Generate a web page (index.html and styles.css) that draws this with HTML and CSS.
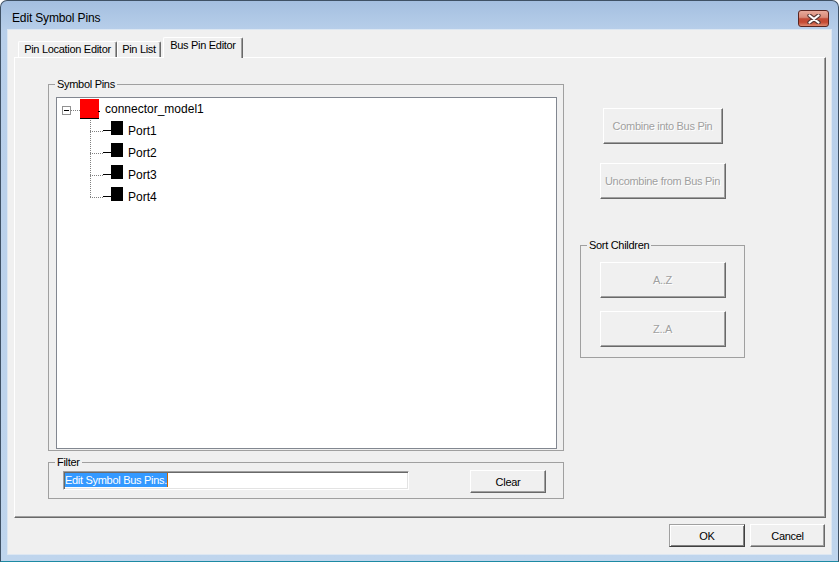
FILE: index.html
```html
<!DOCTYPE html>
<html lang="en">
<head>
  <meta charset="UTF-8">
  <title>Edit Symbol Pins</title>
  <link rel="stylesheet" href="styles.css">
</head>
<body>
  <div class="window">
    <div class="titlebar">
      <span class="title">Edit Symbol Pins</span>
      <button class="close" title="Close">
        <svg width="14" height="10" viewBox="0 0 14 10">
          <path d="M2.5 1.5L11.5 8.5M11.5 1.5L2.5 8.5" stroke="#5b3936" stroke-width="4.4" stroke-linecap="round"/>
          <path d="M2.5 1.5L11.5 8.5M11.5 1.5L2.5 8.5" stroke="#fff" stroke-width="2.2" stroke-linecap="round"/>
        </svg>
      </button>
    </div>

    <div class="client">
      <div class="tabs">
        <div class="tab tab-location">Pin Location Editor</div>
        <div class="tab tab-list">Pin List</div>
        <div class="tab active">Bus Pin Editor</div>
      </div>

      <div class="page">
        <div class="left">
          <fieldset class="group pins">
            <legend>Symbol Pins</legend>
            <div class="tree">
              <div class="node root">
                <span class="expander"></span>
                <span class="link"></span>
                <svg class="bus-icon" width="20" height="20" viewBox="0 0 20 20">
                  <rect x="0" y="0" width="19" height="19" fill="#ff0000"/>
                  <path d="M0 19.5H19M18 12.5H21" stroke="#000"/>
                </svg>
                <span class="label">connector_model1</span>
              </div>
              <div class="node child">
                <span class="branch"></span>
                <svg class="pin-icon" width="20" height="22" viewBox="0 0 20 22">
                  <path d="M0 10.5H8" stroke="#000"/>
                  <rect x="8" y="1" width="12" height="14" fill="#000"/>
                </svg>
                <span class="label">Port1</span>
              </div>
              <div class="node child">
                <span class="branch"></span>
                <svg class="pin-icon" width="20" height="22" viewBox="0 0 20 22">
                  <path d="M0 10.5H8" stroke="#000"/>
                  <rect x="8" y="1" width="12" height="14" fill="#000"/>
                </svg>
                <span class="label">Port2</span>
              </div>
              <div class="node child">
                <span class="branch"></span>
                <svg class="pin-icon" width="20" height="22" viewBox="0 0 20 22">
                  <path d="M0 10.5H8" stroke="#000"/>
                  <rect x="8" y="1" width="12" height="14" fill="#000"/>
                </svg>
                <span class="label">Port3</span>
              </div>
              <div class="node child last">
                <span class="branch"></span>
                <svg class="pin-icon" width="20" height="22" viewBox="0 0 20 22">
                  <path d="M0 10.5H8" stroke="#000"/>
                  <rect x="8" y="1" width="12" height="14" fill="#000"/>
                </svg>
                <span class="label">Port4</span>
              </div>
            </div>
          </fieldset>

          <fieldset class="group filter">
            <legend>Filter</legend>
            <div class="filter-row">
              <div class="textbox"><span class="selected">Edit Symbol Bus Pins.</span></div>
              <button class="btn clear">Clear</button>
            </div>
          </fieldset>
        </div>

        <div class="right">
          <button class="btn combine" disabled>Combine into Bus Pin</button>
          <button class="btn uncombine" disabled>Uncombine from Bus Pin</button>
          <fieldset class="group sort">
            <legend>Sort Children</legend>
            <button class="btn sort-btn" disabled>A..Z</button>
            <button class="btn sort-btn" disabled>Z..A</button>
          </fieldset>
        </div>
      </div>

      <div class="actions">
        <button class="btn ok">OK</button>
        <button class="btn cancel">Cancel</button>
      </div>
    </div>
  </div>
</body>
</html>
```

FILE: styles.css
```css
body {
  margin: 0;
  background: #fff;
  font: 11px "Liberation Sans", Arial, sans-serif;
  letter-spacing: -0.3px;
  color: #000;
}

/* window frame */
.window {
  width: 839px;
  height: 562px;
  box-sizing: border-box;
  border: 1px solid #3f5165;
  border-bottom-color: #1d8aa3;
  border-radius: 7px 7px 0 0;
  background: linear-gradient(#a4bfe0 0, #b8cfea 30px, #bfd5ed 100%);
}
.titlebar {
  height: 28px;
  display: flex;
  justify-content: space-between;
  align-items: flex-start;
}
.title {
  margin: 10px 0 0 11px;
  font-size: 12px;
  line-height: 15px;
  letter-spacing: -0.15px;
}
.close {
  margin: 9px 9px 0 0;
  width: 31px;
  height: 17px;
  box-sizing: border-box;
  padding: 0;
  border: 1px solid #5a2520;
  border-radius: 3px;
  background: linear-gradient(#e8aa9b 0%, #d98b79 42%, #c24b36 52%, #c64a33 75%, #de8a71 100%);
  display: flex;
  align-items: center;
  justify-content: center;
}

.client {
  margin: 0 6px;
  height: 526px;
  box-sizing: border-box;
  border: 1px solid #dde7f2;
  background: #f0f0f0;
  padding-top: 7px;
}

/* tab strip */
.tabs {
  display: flex;
  align-items: flex-end;
  height: 20px;
  margin-left: 10px;
}
.tab {
  height: 16px;
  box-sizing: border-box;
  border-top: 1px solid #fff;
  border-left: 1px solid #fff;
  border-right: 1px solid #696969;
  box-shadow: inset -1px 0 #a0a0a0;
  border-radius: 2px 2px 0 0;
  line-height: 15px;
  text-align: center;
  white-space: nowrap;
}
.tab-location { width: 99px; }
.tab-list { width: 44px; }
.tab.active {
  width: 80px;
  height: 21px;
  margin: 0 0 -1px 2px;
  position: relative;
  z-index: 1;
  background: #f0f0f0;
}

.page {
  margin-left: 6px;
  width: 812px;
  height: 461px;
  box-sizing: border-box;
  border: 1px solid;
  border-color: #fff #696969 #696969 #fff;
  box-shadow: inset -1px -1px #a0a0a0;
  padding: 20px 0 0 33px;
  display: flex;
  align-items: flex-start;
}

/* group boxes */
.group {
  margin: 0;
  padding: 0;
  min-width: 0;
  box-sizing: border-box;
  border: 1px solid #a0a0a0;
}
.group legend {
  padding: 0 2px;
  margin-left: 6px;
  font-size: 11px;
  line-height: 13px;
}

.left { width: 516px; }
.pins { padding: 6px 0 1px; }
.tree {
  margin: 0 6px 0 7px;
  height: 352px;
  box-sizing: border-box;
  border: 1px solid #828790;
  background: #fff;
}

.node {
  display: flex;
  align-items: center;
  height: 22px;
  font-size: 12px;
  letter-spacing: 0;
  white-space: nowrap;
}
.root { padding-left: 5px; }
.expander {
  flex: none;
  width: 9px;
  height: 9px;
  box-sizing: border-box;
  margin-top: 2px;
  border: 1px solid #919191;
  background: linear-gradient(#000, #000) center / 5px 1px no-repeat, #fff;
}
.link {
  flex: none;
  width: 9px;
  height: 1px;
  margin-top: 2px;
  background: repeating-linear-gradient(90deg, #808080 0 1px, transparent 1px 2px);
}
.bus-icon, .pin-icon { flex: none; }
.label { margin-left: 5px; }

.child { padding-left: 33px; }
.branch {
  flex: none;
  width: 13px;
  align-self: stretch;
  background:
    repeating-linear-gradient(180deg, #808080 0 1px, transparent 1px 2px) left top / 1px 100% no-repeat,
    repeating-linear-gradient(90deg, #808080 0 1px, transparent 1px 2px) left 11px / 100% 1px no-repeat;
}
.last .branch {
  background-size: 1px 12px, 100% 1px;
}

.filter {
  margin-top: 5px;
  padding: 1px 0 5px;
}
.filter-row {
  display: flex;
  justify-content: space-between;
  align-items: flex-start;
  margin: 0 17px 0 14px;
}
.textbox {
  width: 346px;
  height: 19px;
  margin-top: 1px;
  box-sizing: border-box;
  padding: 1px 0 0 1px;
  border: 1px solid;
  border-color: #a0a0a0 #fff #fff #a0a0a0;
  box-shadow: inset 1px 1px #696969, inset -1px -1px #e3e3e3;
  background: #fff;
  white-space: nowrap;
}
.selected {
  display: inline-block;
  line-height: 14px;
  background: #3399ff;
  color: #fff;
  border-right: 1px solid #c86400;
}

/* push buttons */
.btn {
  font: 11px "Liberation Sans", Arial, sans-serif;
  letter-spacing: -0.3px;
  color: #000;
  background: #f0f0f0;
  box-sizing: border-box;
  padding: 0;
  border: 1px solid;
  border-color: #fff #696969 #696969 #fff;
  box-shadow: inset -1px -1px #a0a0a0;
}
.btn:disabled {
  color: #a0a0a0;
  text-shadow: 1px 1px #fff;
}
.clear { width: 76px; height: 23px; }

.right {
  width: 165px;
  margin-left: 16px;
  display: flex;
  flex-direction: column;
  align-items: center;
}
.combine { width: 120px; height: 36px; margin-top: 30px; }
.uncombine { width: 126px; height: 36px; margin-top: 19px; }
.sort {
  align-self: stretch;
  margin-top: 40px;
  padding: 10px 0;
  display: flex;
  flex-direction: column;
  align-items: center;
  gap: 13px;
}
.sort-btn { width: 126px; height: 36px; }

.actions {
  display: flex;
  justify-content: flex-end;
  gap: 5px;
  margin-top: 6px;
  padding-right: 6px;
}
.ok {
  width: 76px;
  height: 23px;
  border-color: #a0a0a0 #404040 #404040 #a0a0a0;
  box-shadow: inset 1px 1px #fff, inset -1px -1px #808080;
}
.cancel { width: 75px; height: 23px; }
```
